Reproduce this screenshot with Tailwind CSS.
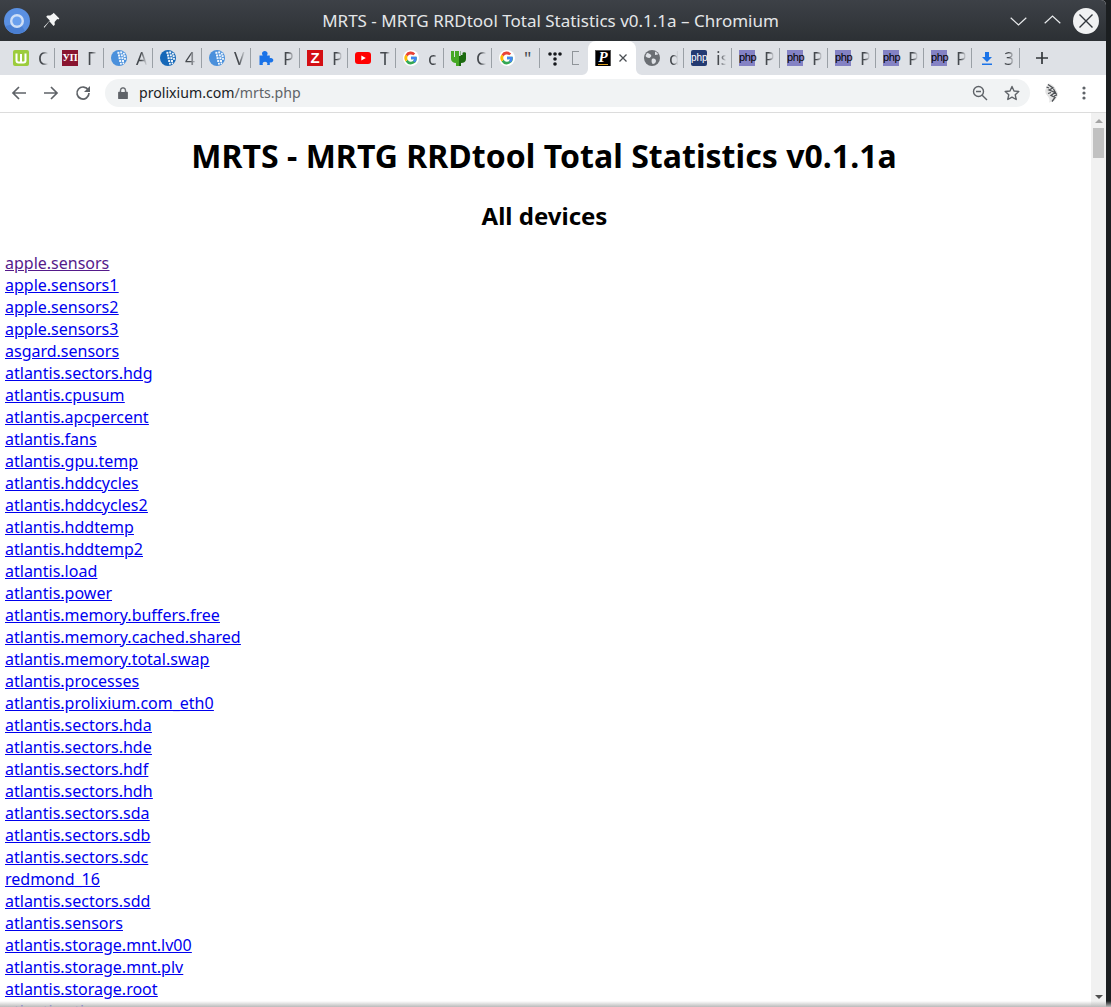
<!doctype html>
<html lang="en">
<head>
<meta charset="utf-8">
<title>MRTS - MRTG RRDtool Total Statistics v0.1.1a</title>
<script src="https://cdn.jsdelivr.net/npm/@tailwindcss/browser@4"></script>
</head>
<body class="overflow-hidden bg-[#1b1e20] font-['Noto_Sans',sans-serif]">
<svg width="0" height="0" class="absolute">
  <defs>
    <symbol id="wm" viewBox="0 0 16 16">
      <circle cx="8" cy="8" r="8" fill="currentColor"/>
      <g fill="#fff" opacity=".92">
        <rect x="6.400" y="1.800" width="2" height="2"/><rect x="9.200" y="1.400" width="2" height="2"/><rect x="12" y="2.800" width="1.800" height="1.800"/>
        <rect x="7" y="4.500" width="2" height="2"/><rect x="9.800" y="4.300" width="2" height="2"/><rect x="12.600" y="5.200" width="2" height="2"/>
        <rect x="7.600" y="7.200" width="2" height="2"/><rect x="10.400" y="7.200" width="2" height="2"/><rect x="13.100" y="8" width="1.800" height="1.800"/>
        <rect x="8.200" y="10" width="2" height="2"/><rect x="11" y="10" width="2" height="2"/><rect x="9" y="12.800" width="1.800" height="1.800"/><rect x="11.600" y="12.500" width="1.600" height="1.600"/>
      </g>
    </symbol>
    <symbol id="gg" viewBox="0 0 16 16">
      <circle cx="8" cy="8" r="8" fill="#fff"/>
      <g transform="translate(8 8) scale(1.32) translate(-8 -8)">
        <path d="M12.200 7H8v1.900h2.400a2.600 2.600 0 0 1-4.900.5L3.900 10.700A4.600 4.600 0 0 0 12.200 7z" fill="#34a853"/>
        <path d="M12.300 8c0-.4 0-.7-.1-1H8v1.900h2.400c-.1.500-.4 1-.9 1.300l1.500 1.200c.8-.8 1.300-2 1.300-3.400z" fill="#4285f4"/>
        <path d="M5.500 9.400a2.700 2.700 0 0 1 0-2.800L3.900 5.300a4.600 4.600 0 0 0 0 5.400z" fill="#fbbc05"/>
        <path d="M8 5.300c.7 0 1.300.2 1.800.7l1.400-1.400A4.600 4.600 0 0 0 3.900 5.300l1.600 1.300C5.900 5.800 6.900 5.300 8 5.300z" fill="#ea4335"/>
      </g>
    </symbol>
  </defs>
</svg>

<div class="flex h-[1007px] w-[1111px] relative">
  <div class="w-[1106px] h-full flex flex-col bg-white rounded-tr-[5px] overflow-hidden">

    <!-- title bar -->
    <div class="h-[41px] shrink-0 flex items-center bg-gradient-to-b from-[#3d4147] to-[#2c3034]">
      <div class="w-[103px] flex items-center pl-[4px] gap-[13px]">
        <svg width="26" height="26" viewBox="0 0 26 26"><circle cx="13" cy="13" r="13" fill="#5a90e2"/><path d="M1 18a13 13 0 0 0 20 5l-5-8z" fill="#4a7fd2"/><circle cx="13" cy="13" r="7" fill="#cfdff6"/><circle cx="13" cy="13" r="4.600" fill="#6aa0ee"/></svg>
        <svg width="17" height="17" viewBox="0 0 16 16" class="mt-[-1px]"><path d="M10 .6 15.400 6l-1 1-1-.3-2.500 2.600.2 2.600-1.200 1.200L6 8.600 1.300 14.800l-.6-.6L6.400 8 3 4.400l1.200-1.200 2.600.2L9.300 1.600z" fill="#f4f5f5"/></svg>
      </div>
      <div class="flex-1 text-center pr-[5px] text-[17px] leading-[22px] text-[#e4e6e8] whitespace-nowrap">MRTS - MRTG RRDtool Total Statistics v0.1.1a – Chromium</div>
      <div class="w-[103px] flex items-center">
        <svg width="17" height="9" viewBox="0 0 17 9" class="ml-[7px] mt-[2px]"><path d="M.7.7 8.500 8 16.300.7" fill="none" stroke="#e8eaec" stroke-width="1.200"/></svg>
        <svg width="17" height="9" viewBox="0 0 17 9" class="ml-[17px] mt-[-2px]"><path d="M.7 8.300 8.500 1l7.800 7.300" fill="none" stroke="#e8eaec" stroke-width="1.200"/></svg>
        <svg width="26" height="26" viewBox="0 0 26 26" class="ml-[12px]"><circle cx="13" cy="13" r="13" fill="#f0f1f2"/><path d="M6.500 6.500l13 13M19.500 6.500l-13 13" stroke="#31363b" stroke-width="1.400"/></svg>
      </div>
    </div>

    <!-- tab strip -->
    <div class="h-[34px] shrink-0 flex items-center pl-[6px] bg-[#dee1e6] text-[18px] leading-[24px] text-[#45494e]">
      <div class="w-[49px] h-full flex items-center pl-[7px] gap-[9px] relative">
        <svg width="16" height="16" viewBox="0 0 16 16" class="shrink-0"><rect width="16" height="16" rx="2" fill="#9ccc3c"/><path d="M3.500 3.500v7a2 2 0 0 0 2 2h5a2 2 0 0 0 2-2v-7M8 4v8" fill="none" stroke="#fff" stroke-width="2"/></svg>
        <span class="w-[10px] overflow-hidden [mask-image:linear-gradient(to_right,black_45%,transparent)]">С</span><i class="absolute right-0 top-[7px] w-px h-[20px] bg-[#9aa0a6]"></i>
      </div>
      <div class="w-[49px] h-full flex items-center pl-[7px] gap-[9px] relative">
        <span class="w-[16px] h-[16px] shrink-0 bg-[#8a1530] text-white text-[10px] leading-[16px] text-center font-bold font-['Liberation_Serif',serif]">УП</span>
        <span class="w-[10px] overflow-hidden [mask-image:linear-gradient(to_right,black_45%,transparent)]">Г</span><i class="absolute right-0 top-[7px] w-px h-[20px] bg-[#9aa0a6]"></i>
      </div>
      <div class="w-[49px] h-full flex items-center pl-[7px] gap-[9px] relative">
        <svg width="16" height="16" class="shrink-0 text-[#4a90dc]"><use href="#wm"/></svg>
        <span class="w-[11px] overflow-hidden [mask-image:linear-gradient(to_right,black_45%,transparent)]">А</span><i class="absolute right-0 top-[7px] w-px h-[20px] bg-[#9aa0a6]"></i>
      </div>
      <div class="w-[49px] h-full flex items-center pl-[7px] gap-[9px] relative">
        <svg width="16" height="16" class="shrink-0 text-[#1668b8]"><use href="#wm"/></svg>
        <span class="w-[11px] overflow-hidden [mask-image:linear-gradient(to_right,black_45%,transparent)]">4</span><i class="absolute right-0 top-[7px] w-px h-[20px] bg-[#9aa0a6]"></i>
      </div>
      <div class="w-[49px] h-full flex items-center pl-[7px] gap-[9px] relative">
        <svg width="16" height="16" class="shrink-0 text-[#4a90dc]"><use href="#wm"/></svg>
        <span class="w-[11px] overflow-hidden [mask-image:linear-gradient(to_right,black_45%,transparent)]">V</span><i class="absolute right-0 top-[7px] w-px h-[20px] bg-[#9aa0a6]"></i>
      </div>
      <div class="w-[49px] h-full flex items-center pl-[7px] gap-[9px] relative">
        <svg width="16" height="16" viewBox="0 0 16 16" class="shrink-0"><path d="M1.500 5.500h3.300c-.5-.5-.8-1.200-.8-2 0-1.400 1.300-2.500 2.800-2.500s2.800 1.100 2.800 2.500c0 .8-.3 1.500-.8 2h3v2.800c.4-.2.8-.3 1.200-.3 1.300 0 2.300 1 2.300 2.200s-1 2.300-2.300 2.300c-.4 0-.8-.1-1.200-.3V15H9c.3-.4.4-.8.4-1.200 0-1.200-1.100-2-2.400-2s-2.400.8-2.400 2c0 .4.100.8.400 1.200H1.500z" fill="#1a73e8"/></svg>
        <span class="w-[11px] overflow-hidden [mask-image:linear-gradient(to_right,black_45%,transparent)]">P</span><i class="absolute right-0 top-[7px] w-px h-[20px] bg-[#9aa0a6]"></i>
      </div>
      <div class="w-[48px] h-full flex items-center pl-[7px] gap-[9px] relative">
        <span class="w-[16px] h-[16px] shrink-0 bg-[#d40f14] text-white text-[15px] leading-[16px] text-center font-bold font-['Liberation_Sans',sans-serif]">Z</span>
        <span class="w-[10px] overflow-hidden [mask-image:linear-gradient(to_right,black_45%,transparent)]">P</span><i class="absolute right-0 top-[7px] w-px h-[20px] bg-[#9aa0a6]"></i>
      </div>
      <div class="w-[48px] h-full flex items-center pl-[7px] gap-[9px] relative">
        <svg width="16" height="16" viewBox="0 0 16 16" class="shrink-0"><rect y="2" width="16" height="12" rx="3" fill="#f00"/><path d="M6.300 5.500 10.800 8l-4.500 2.500z" fill="#fff"/></svg>
        <span class="w-[10px] overflow-hidden [mask-image:linear-gradient(to_right,black_60%,transparent)]">T</span><i class="absolute right-0 top-[7px] w-px h-[20px] bg-[#9aa0a6]"></i>
      </div>
      <div class="w-[48px] h-full flex items-center pl-[7px] gap-[9px] relative">
        <svg width="16" height="16" class="shrink-0"><use href="#gg"/></svg>
        <span class="w-[10px] overflow-hidden [mask-image:linear-gradient(to_right,black_60%,transparent)]">c</span><i class="absolute right-0 top-[7px] w-px h-[20px] bg-[#9aa0a6]"></i>
      </div>
      <div class="w-[48px] h-full flex items-center pl-[7px] gap-[9px] relative">
        <svg width="16" height="16" viewBox="0 0 16 16" class="shrink-0"><path d="M0 1h8v15H5v-3C2 13 0 11 0 9z" fill="#45a824"/><path d="M8 1h2v4h1.500V3c0-1 3.500-1 3.500 0v6c0 2.500-2 4-5 4v3H8z" fill="#1b6a0f"/><path d="M8 0h1.600v6H8zM3 1h1v6H3z" fill="#dee1e6"/></svg>
        <span class="w-[10px] overflow-hidden [mask-image:linear-gradient(to_right,black_45%,transparent)]">С</span><i class="absolute right-0 top-[7px] w-px h-[20px] bg-[#9aa0a6]"></i>
      </div>
      <div class="w-[48px] h-full flex items-center pl-[7px] gap-[9px] relative">
        <svg width="16" height="16" class="shrink-0"><use href="#gg"/></svg>
        <span class="w-[10px] overflow-hidden">"</span><i class="absolute right-0 top-[7px] w-px h-[20px] bg-[#9aa0a6]"></i>
      </div>
      <div class="w-[48px] h-full flex items-center pl-[7px] gap-[9px]">
        <svg width="16" height="16" viewBox="0 0 16 16" class="shrink-0"><g fill="#15181c"><circle cx="3" cy="4" r="1.800"/><circle cx="8" cy="4" r="1.800"/><circle cx="13" cy="4" r="1.800"/><circle cx="8" cy="9" r="1.800"/><circle cx="8" cy="14" r="1.800"/></g></svg>
        <span class="w-[7px] h-[14px] border border-[#8f9499] border-r-0"></span>
      </div>
      <div class="w-[48px] h-full bg-white rounded-t-[8px] flex items-center pl-[7px] gap-[7px] relative">
        <svg class="absolute left-[-6px] bottom-0" width="6" height="6" viewBox="0 0 6 6"><path d="M6 0v6H0a6 6 0 0 0 6-6z" fill="#fff"/></svg>
        <span class="w-[16px] h-[16px] shrink-0 bg-black text-white text-[15px] leading-[13px] text-center font-bold italic font-['Liberation_Serif',serif] border border-[#555] border-b-0 overflow-hidden relative">P<i class="absolute left-[2px] right-[2px] bottom-[1px] h-px bg-[#e0a020]"></i></span>
        <svg width="10" height="10" viewBox="0 0 10 10" class="shrink-0"><path d="M1.500 1.500l7 7M8.500 1.500l-7 7" stroke="#4a4e53" stroke-width="1.300"/></svg>
        <svg class="absolute right-[-6px] bottom-0" width="6" height="6" viewBox="0 0 6 6"><path d="M0 0v6h6a6 6 0 0 1-6-6z" fill="#fff"/></svg>
      </div>
      <div class="w-[48px] h-full flex items-center pl-[8px] gap-[9px] relative">
        <svg width="16" height="16" viewBox="0 0 16 16" class="shrink-0"><circle cx="8" cy="8" r="8" fill="#6a6e73"/><path d="M3 3c2 0 3 1 4 2S6 8 5 8 2 7 1.500 6zM8 9c2-1 4 0 4 2s-2 3-3 3-2-3-1-5zM11 1.500c2 1 3 2 3 3l-3 .5z" fill="#dee1e6"/></svg>
        <span class="w-[9px] overflow-hidden [mask-image:linear-gradient(to_right,black_45%,transparent)]">d</span><i class="absolute right-0 top-[7px] w-px h-[20px] bg-[#9aa0a6]"></i>
      </div>
      <div class="w-[48px] h-full flex items-center pl-[7px] gap-[9px] relative">
        <span class="w-[16px] h-[16px] shrink-0 rounded-[2px] bg-[#233a72] text-white text-[10px] leading-[15px] text-center font-['Liberation_Sans',sans-serif]">php</span>
        <span class="w-[10px] overflow-hidden [mask-image:linear-gradient(to_right,black_45%,transparent)]">is</span><i class="absolute right-0 top-[7px] w-px h-[20px] bg-[#9aa0a6]"></i>
      </div>
      <div class="w-[48px] h-full flex items-center pl-[7px] gap-[9px] relative">
        <span class="w-[16px] h-[16px] shrink-0 bg-[#8482c4] text-black text-[11px] leading-[15px] text-center font-['Liberation_Sans',sans-serif] tracking-[-0.4px]">php</span>
        <span class="w-[10px] overflow-hidden [mask-image:linear-gradient(to_right,black_45%,transparent)]">P</span><i class="absolute right-0 top-[7px] w-px h-[20px] bg-[#9aa0a6]"></i>
      </div>
      <div class="w-[48px] h-full flex items-center pl-[7px] gap-[9px] relative">
        <span class="w-[16px] h-[16px] shrink-0 bg-[#8482c4] text-black text-[11px] leading-[15px] text-center font-['Liberation_Sans',sans-serif] tracking-[-0.4px]">php</span>
        <span class="w-[10px] overflow-hidden [mask-image:linear-gradient(to_right,black_45%,transparent)]">P</span><i class="absolute right-0 top-[7px] w-px h-[20px] bg-[#9aa0a6]"></i>
      </div>
      <div class="w-[48px] h-full flex items-center pl-[7px] gap-[9px] relative">
        <span class="w-[16px] h-[16px] shrink-0 bg-[#8482c4] text-black text-[11px] leading-[15px] text-center font-['Liberation_Sans',sans-serif] tracking-[-0.4px]">php</span>
        <span class="w-[10px] overflow-hidden [mask-image:linear-gradient(to_right,black_45%,transparent)]">P</span><i class="absolute right-0 top-[7px] w-px h-[20px] bg-[#9aa0a6]"></i>
      </div>
      <div class="w-[48px] h-full flex items-center pl-[7px] gap-[9px] relative">
        <span class="w-[16px] h-[16px] shrink-0 bg-[#8482c4] text-black text-[11px] leading-[15px] text-center font-['Liberation_Sans',sans-serif] tracking-[-0.4px]">php</span>
        <span class="w-[10px] overflow-hidden [mask-image:linear-gradient(to_right,black_45%,transparent)]">P</span><i class="absolute right-0 top-[7px] w-px h-[20px] bg-[#9aa0a6]"></i>
      </div>
      <div class="w-[48px] h-full flex items-center pl-[7px] gap-[9px] relative">
        <span class="w-[16px] h-[16px] shrink-0 bg-[#8482c4] text-black text-[11px] leading-[15px] text-center font-['Liberation_Sans',sans-serif] tracking-[-0.4px]">php</span>
        <span class="w-[10px] overflow-hidden [mask-image:linear-gradient(to_right,black_45%,transparent)]">P</span><i class="absolute right-0 top-[7px] w-px h-[20px] bg-[#9aa0a6]"></i>
      </div>
      <div class="w-[48px] h-full flex items-center pl-[7px] gap-[9px] relative">
        <svg width="16" height="16" viewBox="0 0 16 16" class="shrink-0"><path d="M6 2h4v5h3l-5 5-5-5h3zM3 13.500h10V15H3z" fill="#1a73e8"/></svg>
        <span class="w-[10px] overflow-hidden [mask-image:linear-gradient(to_right,black_45%,transparent)]">3</span><i class="absolute right-0 top-[7px] w-px h-[20px] bg-[#9aa0a6]"></i>
      </div>
      <svg width="12" height="12" viewBox="0 0 12 12" class="ml-[16px]"><path d="M6 0v12M0 6h12" stroke="#33373b" stroke-width="1.700"/></svg>
    </div>

    <!-- toolbar -->
    <div class="h-[38px] shrink-0 flex items-center bg-white border-b border-[#dcdcdc] pb-[2px] pt-[1px]">
      <svg width="16" height="16" viewBox="0 0 16 16" class="ml-[11px]"><path d="M15 8H2M8 2 2 8l6 6" fill="none" stroke="#5f6368" stroke-width="1.700"/></svg>
      <svg width="16" height="16" viewBox="0 0 16 16" class="ml-[16px]"><path d="M1 8h13M8 2l6 6-6 6" fill="none" stroke="#5f6368" stroke-width="1.700"/></svg>
      <svg width="16" height="16" viewBox="0 0 16 16" class="ml-[16px]"><path d="M13.300 5.200A6 6 0 1 0 14 8" fill="none" stroke="#5f6368" stroke-width="1.700"/><path d="M15 1v6H9z" fill="#5f6368"/></svg>
      <div class="ml-[14px] w-[925px] h-[28px] rounded-full bg-[#f1f3f4] flex items-center">
        <svg width="10" height="12" viewBox="0 0 10 12" class="ml-[13px]"><path d="M2.200 5V3.300a2.800 2.800 0 0 1 5.600 0V5M1 5h8a.8.8 0 0 1 .8.800v5.400a.8.800 0 0 1-.8.800H1a.8.800 0 0 1-.8-.8V5.800A.8.800 0 0 1 1 5z" fill="#5f6368" stroke="#5f6368" stroke-width=".6"/><path d="M3.200 5V3.300a1.800 1.800 0 0 1 3.600 0V5z" fill="#f1f3f4"/></svg>
        <div class="ml-[11px] text-[14.15px] leading-[20px] text-[#5f6368] whitespace-nowrap"><span class="text-[#202124]">prolixium.com</span>/mrts.php</div>
        <div class="flex-1"></div>
        <svg width="16" height="16" viewBox="0 0 16 16"><circle cx="6.500" cy="6.500" r="5" fill="none" stroke="#5f6368" stroke-width="1.400"/><path d="M10.200 10.200 15 15M4 6.500h5" stroke="#5f6368" stroke-width="1.400"/></svg>
        <svg width="16" height="16" viewBox="0 0 16 16" class="ml-[16px] mr-[10px]"><path d="M8 1.500l2 4.500 4.800.5-3.600 3.200 1 4.800L8 12.100 3.800 14.500l1-4.800L1.200 6.500 6 6z" fill="none" stroke="#5f6368" stroke-width="1.400" stroke-linejoin="round"/></svg>
      </div>
      <svg width="15" height="20" viewBox="0 0 15 20" class="ml-[14px] blur-[0.5px]"><path d="M4 .5c3 0 6 2 7.500 5l2.500 5c0 3-2 6-4 7.500L5 19.500c1-2 .5-4-1-6s-3.500-4-2.500-7z" fill="#e4e4e4"/><path d="M4 1.500l5 3.500-4 2 6 2.500-4 3 4 2-3 4M5 5 2.500 4M9.500 6l3 5.500M7 9.500l-3 1M10 13l3-1" fill="none" stroke="#4d5054" stroke-width="1.300"/></svg>
      <svg width="4" height="14" viewBox="0 0 4 14" class="ml-[23px]"><circle cx="2" cy="2" r="1.600" fill="#5f6368"/><circle cx="2" cy="7" r="1.600" fill="#5f6368"/><circle cx="2" cy="12" r="1.600" fill="#5f6368"/></svg>
    </div>

    <!-- page -->
    <div class="flex-1 flex min-h-0">
      <main class="flex-1 min-w-0 overflow-hidden text-black text-[16px] leading-[22px]">
        <h1 class="mt-[21px] mb-[21px] pr-[3px] text-[32px] leading-[44px] font-bold text-center whitespace-nowrap tracking-[0.04px]">MRTS - MRTG RRDtool Total Statistics v0.1.1a</h1>
        <h2 class="mb-[20px] pr-[2px] text-[24px] leading-[33px] font-bold text-center">All devices</h2>
        <div class="flex flex-col items-start pl-[5px] text-[#0000ee] underline">
          <a href="#" class="text-[#551a8b]">apple.sensors</a>
          <a href="#">apple.sensors1</a>
          <a href="#">apple.sensors2</a>
          <a href="#">apple.sensors3</a>
          <a href="#">asgard.sensors</a>
          <a href="#">atlantis.sectors.hdg</a>
          <a href="#">atlantis.cpusum</a>
          <a href="#">atlantis.apcpercent</a>
          <a href="#">atlantis.fans</a>
          <a href="#">atlantis.gpu.temp</a>
          <a href="#">atlantis.hddcycles</a>
          <a href="#">atlantis.hddcycles2</a>
          <a href="#">atlantis.hddtemp</a>
          <a href="#">atlantis.hddtemp2</a>
          <a href="#">atlantis.load</a>
          <a href="#">atlantis.power</a>
          <a href="#">atlantis.memory.buffers.free</a>
          <a href="#">atlantis.memory.cached.shared</a>
          <a href="#">atlantis.memory.total.swap</a>
          <a href="#">atlantis.processes</a>
          <a href="#">atlantis.prolixium.com_eth0</a>
          <a href="#">atlantis.sectors.hda</a>
          <a href="#">atlantis.sectors.hde</a>
          <a href="#">atlantis.sectors.hdf</a>
          <a href="#">atlantis.sectors.hdh</a>
          <a href="#">atlantis.sectors.sda</a>
          <a href="#">atlantis.sectors.sdb</a>
          <a href="#">atlantis.sectors.sdc</a>
          <a href="#">redmond_16</a>
          <a href="#">atlantis.sectors.sdd</a>
          <a href="#">atlantis.sensors</a>
          <a href="#">atlantis.storage.mnt.lv00</a>
          <a href="#">atlantis.storage.mnt.plv</a>
          <a href="#">atlantis.storage.root</a>
          <a href="#">atlantis.other</a>
        </div>
      </main>
      <div class="w-[15px] shrink-0 bg-[#f1f1f1] flex flex-col items-center pt-[6px] pb-[3px]">
        <svg width="8" height="4" viewBox="0 0 8 4" class="shrink-0"><path d="M4 0l4 4H0z" fill="#a3a3a3"/></svg>
        <div class="w-[11px] h-[30px] mt-[5px] bg-[#c1c1c1]"></div>
        <div class="flex-1"></div>
        <svg width="8" height="4" viewBox="0 0 8 4" class="shrink-0 mb-[5px]"><path d="M0 0h8L4 4z" fill="#505050"/></svg>
      </div>
    </div>
  </div>
  <div class="w-[5px] shrink-0 bg-[#1b1e20]"></div>
  <div class="absolute left-0 right-0 bottom-0 h-[6px] bg-gradient-to-b from-[#bbbbbb]/0 to-[#bbbbbb]"></div>
</div>
</body>
</html>
